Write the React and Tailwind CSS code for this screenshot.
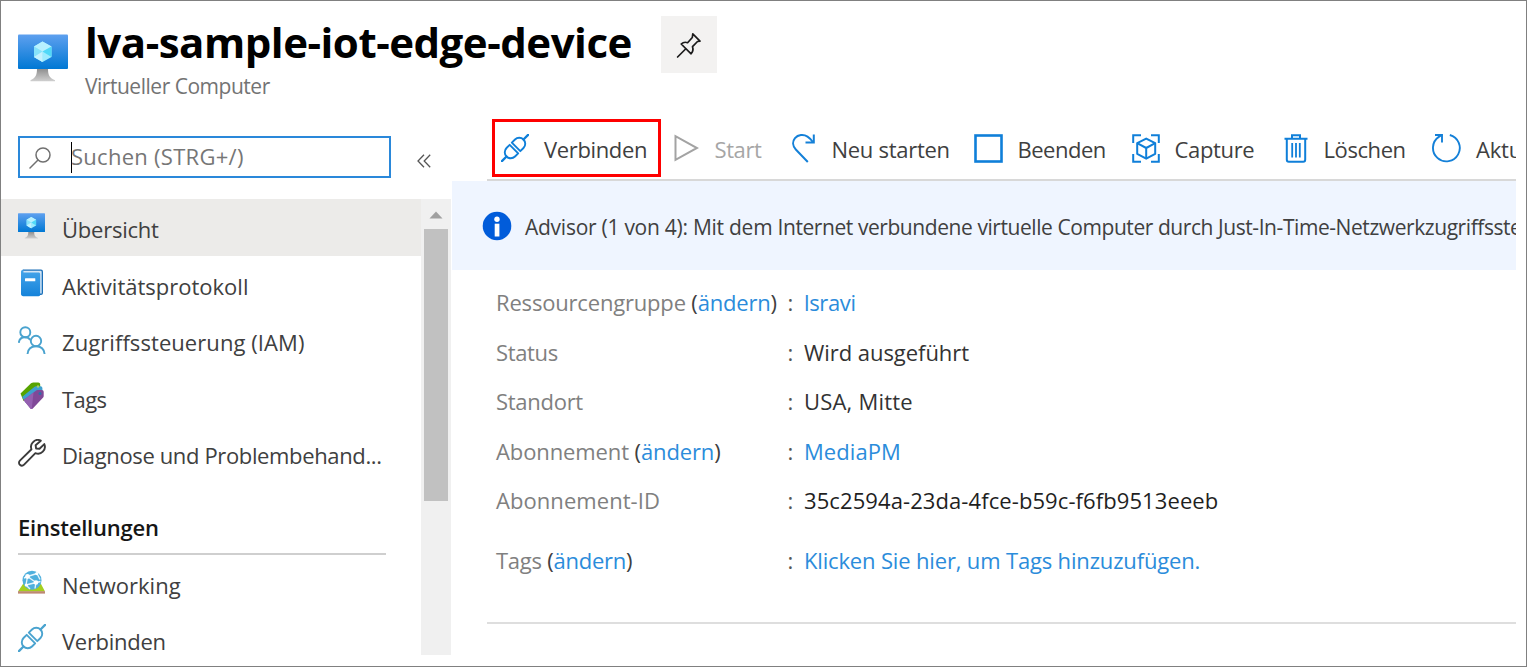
import React from "react";

/* ---------- Icons ---------- */

function MonitorIcon({ className, id }) {
  return (
    <svg className={className} viewBox="0 0 50 48" fill="none">
      <defs>
        <linearGradient id={`${id}-screen`} x1="0" y1="0" x2="0" y2="1">
          <stop offset="0" stopColor="#5ea0ef" />
          <stop offset="1" stopColor="#0078d4" />
        </linearGradient>
        <linearGradient id={`${id}-stand`} x1="0" y1="0" x2="0" y2="1">
          <stop offset="0" stopColor="#8a8a8a" />
          <stop offset="1" stopColor="#cfcfcf" />
        </linearGradient>
      </defs>
      <path d="M19 34h11c0 7 1 9.5 7 12.2v1H12.500v-1C18 43.500 19 41 19 34z" fill={`url(#${id}-stand)`} />
      <rect x="0" y="0.500" width="50" height="34.500" rx="1" fill={`url(#${id}-screen)`} />
      <path d="M24.500 7.500l9 5v10.500l-9 5-8.500-5V12.500z" fill="#9cebff" />
      <path d="M16 12.500l8.500-5 9 5-9 5z" fill="#b8f1ff" />
      <path d="M16 12.500l8.500 5V28L16 23z" fill="#86e2fa" />
      <path d="M24.500 17.500l9-5V23z" fill="#50d8f8" />
      <path d="M16 23l8.500-5.500V28z" fill="#c3f1ff" />
    </svg>
  );
}

function PinIcon() {
  return (
    <svg className="h-[28px] w-[28px]" viewBox="0 0 28 28" fill="none" stroke="#1b1b1b" strokeWidth="1.700" strokeLinejoin="round" strokeLinecap="round">
      <path d="M17.800 2.800l7.200 7.300-2.500.400-5 5.200c.9 2.500.4 4.900-1.400 7.100L6.200 13c2-1.900 4-2.200 6.400-1.300l4.700-5.200z" />
      <path d="M10.600 18L2.600 26" />
    </svg>
  );
}

function SearchIcon() {
  return (
    <svg className="h-[22px] w-[22px]" viewBox="0 0 22 22" fill="none" stroke="#707070" strokeWidth="1.500" strokeLinecap="round">
      <circle cx="14" cy="8" r="7" />
      <path d="M9 13L1 21" />
    </svg>
  );
}

function CollapseIcon() {
  return (
    <svg className="h-[14px] w-[14px]" viewBox="0 0 14 14" fill="none" stroke="#555" strokeWidth="1.300">
      <path d="M7 .800L1 7l6 6.200M13.200.800L7.200 7l6 6.200" />
    </svg>
  );
}

function PlugIcon({ className, color }) {
  return (
    <svg className={className} viewBox="0 0 28 28" fill="none" stroke={color} strokeWidth="1.900" strokeLinecap="round" strokeLinejoin="round">
      <g transform="translate(14 14) rotate(-45)">
        <path d="M-18.500 0H-12M12 0H18.500" strokeWidth="2.300" />
        <path d="M-1.500 -6H-6a6 6 0 0 0 0 12H-1.500z" />
        <path d="M1.500 -6H6a6 6 0 0 1 0 12H1.500z" />
      </g>
    </svg>
  );
}

function PlayIcon() {
  return (
    <svg className="h-[28px] w-[25px]" viewBox="0 0 25 28" fill="none" stroke="#a3a3a3" strokeWidth="2">
      <path d="M1.500 2.200v23.600L23 14z" />
    </svg>
  );
}

function RestartIcon() {
  return (
    <svg className="h-[30px] w-[24px]" viewBox="0 0 24 30" fill="none" stroke="#1480d8" strokeWidth="2">
      <path d="M15.800 29L3.800 16.500C.500 13 .300 8.500 3 5.200 6 1.600 11.500 1 15.500 3.600c2 1.300 3.600 3 5.200 5.200" />
      <path d="M21.800 1.500v8h-8.300" />
    </svg>
  );
}

function StopIcon() {
  return (
    <svg className="h-[29px] w-[29px]" viewBox="0 0 29 29" fill="none" stroke="#0f7fd9" strokeWidth="2.600">
      <rect x="1.500" y="1.500" width="26" height="26" />
    </svg>
  );
}

function CaptureIcon() {
  return (
    <svg className="h-[29px] w-[28px]" viewBox="0 0 28 29" fill="none" stroke="#0f7fd9" strokeWidth="2">
      <path d="M1.200 9V1.300H9M19 1.300h7.800V9M26.800 20v7.700H19M9 27.700H1.200V20" />
      <path d="M14.200 4.600l9 4.600v10.600l-9 4.900-9-4.900V9.200z" strokeLinejoin="round" />
      <path d="M5.200 9.200l9 4.800 9-4.800M14.200 14v10.700" />
    </svg>
  );
}

function TrashIcon() {
  return (
    <svg className="h-[29px] w-[24px]" viewBox="0 0 24 29" fill="none" stroke="#0f7fd9" strokeWidth="2">
      <path d="M.500 4.800h23M8 4.500V1.200h8v3.300" />
      <path d="M2.800 5v20.500c0 1.400.700 2.200 2 2.200h14.400c1.300 0 2-.800 2-2.200V5" />
      <path d="M8.200 9v14.500M12 9v14.500M15.800 9v14.500" strokeWidth="1.800" />
    </svg>
  );
}

function RefreshIcon() {
  return (
    <svg className="h-[30px] w-[30px]" viewBox="0 0 30 30" fill="none" stroke="#1480d8" strokeWidth="1.900">
      <path d="M18.800 2A13.400 13.400 0 1 1 7.800 3.900L11 1.700" />
      <path d="M4 2h7v7.500" />
    </svg>
  );
}

function BookIcon() {
  return (
    <svg className="h-[28px] w-[28px]" viewBox="0 0 28 28">
      <defs>
        <linearGradient id="book-cover" x1="0" y1="0" x2="0" y2="1">
          <stop offset="0" stopColor="#46a5ea" />
          <stop offset="1" stopColor="#1583da" />
        </linearGradient>
      </defs>
      <path d="M5 .500h18a2 2 0 0 1 2 2V24a2 2 0 0 1-2 2H5z" fill="#1a6fb8" />
      <path d="M5 1.800h17.500c.800 0 1.200.500 1.200 1.200v21.500H5z" fill="#d5e6f5" />
      <path d="M5.300.500C4 .500 3 1.500 3 2.800V25c0 1.300 1 2.200 2.200 2.200H20.500c1.200 0 1.700-.700 1.700-1.700V5.200c0-1-.700-1.700-1.700-1.700H5.500z" fill="url(#book-cover)" />
      <rect x="7" y="9.300" width="10.300" height="3" rx=".500" fill="#fff" />
    </svg>
  );
}

function PeopleIcon() {
  return (
    <svg className="h-[28px] w-[28px]" viewBox="0 0 28 28" fill="none" stroke="#4aa3cf" strokeWidth="1.900">
      <circle cx="7.300" cy="6.200" r="5" />
      <circle cx="18" cy="15" r="5.200" />
      <path d="M.800 16.800C1.200 13.300 3.300 11.300 7 11.300c2.400 0 4.200 1 5.300 2.600" />
      <path d="M9.500 28c.500-4.800 3.500-7.700 8.500-7.700s8.100 2.900 8.600 7.700" />
    </svg>
  );
}

function TagsIcon() {
  return (
    <svg className="h-[28px] w-[28px]" viewBox="0 0 28 28">
      <path d="M2.500 11.500L12 2.200C13 1.200 14 .700 15.200.600h5c1.200 0 2 .8 2 2V8L5.500 19z" fill="#57a300" />
      <path d="M4 15L16 5.200c.9-.8 1.700-1 2.700-1h3.800c1.100 0 1.900.8 1.900 1.900V12L8 21z" fill="#3fa0cf" />
      <path d="M5.500 18L17.500 9c.700-.600 1.300-.900 2.300-.900h4c1.200 0 1.900.8 1.900 1.900v3.700c0 1-.300 1.600-1 2.300L14.800 26.500c-.8.8-1.700.8-2.400 0z" fill="#804998" />
      <path d="M5.500 18l10-7.500-1.800 16.600c-.5 0-.9-.2-1.300-.6z" fill="#9460b0" />
      <circle cx="22" cy="11.500" r="1.500" fill="#2f6ea8" />
      <circle cx="20" cy="4.500" r="1.200" fill="#9fd06a" />
    </svg>
  );
}

function WrenchIcon() {
  return (
    <svg className="h-[28px] w-[28px]" viewBox="0 0 28 28" fill="none" stroke="#3b3b3b" strokeWidth="1.900" strokeLinejoin="round">
      <path d="M22.800 1.700c-2.700-1.300-6-.700-8 1.600-1.900 2-2.200 4.700-1.300 7L1.900 21.600c-1.200 1.200-1.200 3 0 4.200 1.200 1.100 3 1.100 4.200-.1l11.300-11.500c2.500 1 5.400.6 7.400-1.500 2.100-2.100 2.600-5 1.500-7.600l-4.800 4.700-3.400-.3-.5-3.300z" />
    </svg>
  );
}

function NetworkIcon() {
  return (
    <svg className="h-[28px] w-[28px]" viewBox="0 0 28 28">
      <path d="M5 16h18l4 7.500H0z" fill="#a4cf1f" />
      <path d="M9 16h10l-1.500 4h-7z" fill="#8ab51a" />
      <rect x="0" y="23.200" width="27" height="2.400" fill="#bd8972" />
      <circle cx="14" cy="12.300" r="9.500" fill="#4fb0dd" />
      <path d="M9.500 8.500l9.500-3M9.500 8.500l8.500 6M9.500 8.500L8 17M8 17l10-2.500M19 5.500l3 6M18 14.500l4.500-1M18 14.500l-1 6M8 17l4 4M9.500 8.500L6 10" stroke="#e6f5fc" strokeWidth="1.400" fill="none" />
      <circle cx="9.500" cy="8.500" r="2.400" fill="#fff" />
      <circle cx="18" cy="14.500" r="2.300" fill="#fff" />
      <circle cx="18.800" cy="5.600" r="1.600" fill="#fff" />
      <circle cx="8.300" cy="17" r="1.600" fill="#fff" />
    </svg>
  );
}

function InfoIcon() {
  return (
    <svg className="h-[30px] w-[30px]" viewBox="0 0 30 30">
      <circle cx="15" cy="15" r="14.300" fill="#015cda" />
      <circle cx="15" cy="8.200" r="2.700" fill="#fff" />
      <rect x="12.700" y="12.700" width="4.700" height="12.800" fill="#fff" />
    </svg>
  );
}

/* ---------- Sidebar ---------- */

function NavItem({ icon, label, active, tracking, lift = "pb-[1px]" }) {
  return (
    <li className={`flex h-[56.500px] shrink-0 items-center pl-[17px] ${active ? "bg-[#ecebe9]" : ""}`}>
      <span className={`flex w-[44px] shrink-0 ${lift}`}>{icon}</span>
      <span className={`whitespace-nowrap pt-[4px] leading-[30px] ${tracking}`}>{label}</span>
    </li>
  );
}

function Sidebar() {
  return (
    <div className="flex w-[450px] shrink-0 flex-col">
      <div className="flex h-[62px] items-center pt-[15px]">
        <div className="ml-[17px] mt-[-1px] flex h-[42px] w-[372.500px] items-center border-2 border-[#2a88da] bg-white">
          <span className="ml-[9px] mt-[1px] flex w-[42px] shrink-0"><SearchIcon /></span>
          <span className="h-[31px] w-px shrink-0 bg-black" />
          <span className="ml-[-1px] whitespace-nowrap pb-[2px] leading-[30px] tracking-[0.280px] text-[#767676]">Suchen (STRG+/)</span>
        </div>
        <span className="ml-[26px] mt-[6px]"><CollapseIcon /></span>
      </div>
      <div className="mt-[18px] flex h-[456px] overflow-hidden">
        <div className="flex w-[420px] shrink-0 flex-col text-[#404040]">
          <ul className="shrink-0">
            <NavItem active icon={<MonitorIcon id="nav-vm" className="h-[26px] w-[27px]" />} label="Übersicht" tracking="tracking-[-0.240px]" lift="pb-[3px]" />
            <NavItem icon={<BookIcon />} label="Aktivitätsprotokoll" tracking="tracking-[0px]" />
            <NavItem icon={<PeopleIcon />} label="Zugriffssteuerung (IAM)" tracking="tracking-[0.070px]" />
            <NavItem icon={<TagsIcon />} label="Tags" tracking="tracking-[-0.600px]" />
            <NavItem icon={<WrenchIcon />} label="Diagnose und Problembehand..." tracking="tracking-[-0.360px]" />
          </ul>
          <div className="ml-[17px] mr-[35px] flex h-[73px] shrink-0 items-end border-b-2 border-[#cfcfcf] pb-[11px]">
            <h2 className="whitespace-nowrap font-semibold leading-[30px] tracking-[-0.220px] text-[#161616]">Einstellungen</h2>
          </div>
          <ul className="shrink-0">
            <NavItem icon={<NetworkIcon />} label="Networking" tracking="tracking-[0px]" lift="pb-[1px]" />
            <NavItem icon={<PlugIcon className="h-[28px] w-[28px]" color="#4aa3cf" />} label="Verbinden" tracking="tracking-[-0.280px]" lift="pb-[2px]" />
          </ul>
        </div>
        <div className="flex w-[30px] shrink-0 flex-col items-center bg-[#f0f0f0]">
          <svg className="mt-[12px] h-[8px] w-[14px]" viewBox="0 0 14 8"><path d="M7 .500L13.500 7.500H.500z" fill="#a0a0a0" /></svg>
          <div className="mt-[9.500px] h-[272px] w-[24px] bg-[#c1c1c1]" />
        </div>
      </div>
    </div>
  );
}

/* ---------- Main ---------- */

function Command({ icon, label, iconBox, tracking, disabled }) {
  return (
    <div className="flex shrink-0 items-center">
      <span className={`flex shrink-0 ${iconBox}`}>{icon}</span>
      <span className={`whitespace-nowrap pt-[2px] leading-[30px] ${tracking} ${disabled ? "text-[#a6a6a6]" : "text-[#404040]"}`}>{label}</span>
    </div>
  );
}

function Toolbar() {
  return (
    <div className="ml-[36px] flex h-[62px] items-start overflow-hidden border-b-2 border-[#d8d8d8]">
      <div className="ml-[5px] flex h-[58px] w-[169px] shrink-0 items-center border-[3px] border-[#fe0000] pl-[6px]">
        <Command icon={<PlugIcon className="h-[28px] w-[28px]" color="#0f7fd9" />} label="Verbinden" iconBox="w-[43px]" tracking="tracking-[-0.350px]" />
      </div>
      <div className="flex h-[58px] items-center">
        <div className="ml-[12.500px] w-[118.500px]"><Command disabled icon={<PlayIcon />} label="Start" iconBox="w-[41px]" tracking="tracking-[-0.400px]" /></div>
        <div className="w-[182px]"><Command icon={<RestartIcon />} label="Neu starten" iconBox="w-[39.500px]" tracking="tracking-[-0.280px]" /></div>
        <div className="w-[158px]"><Command icon={<StopIcon />} label="Beenden" iconBox="w-[43.500px]" tracking="tracking-[-0.480px]" /></div>
        <div className="w-[152px]"><Command icon={<CaptureIcon />} label="Capture" iconBox="w-[42.500px]" tracking="tracking-[-0.350px]" /></div>
        <div className="w-[147px]"><Command icon={<TrashIcon />} label="Löschen" iconBox="w-[39.500px]" tracking="tracking-[-0.420px]" /></div>
        <Command icon={<RefreshIcon />} label="Aktualisieren" iconBox="w-[45px]" tracking="tracking-[-0.200px]" />
      </div>
    </div>
  );
}

function Property({ label, change, height, value, link, tracking, valueTracking, dark }) {
  return (
    <div className={`flex items-center whitespace-nowrap leading-[30px] ${height}`}>
      <dt className={`w-[291.500px] shrink-0 text-[#808080] ${tracking}`}>
        {label}
        {change && <span className="text-[#404040]"> (<a className="text-[#2b8cdb]">ändern</a>)</span>}
      </dt>
      <dd className="w-[16.500px] shrink-0 text-[#555]">:</dd>
      <dd className={`${valueTracking} ${link ? "text-[#2b8cdb]" : dark ? "text-[#1f1f1f]" : "text-[#333]"}`}>{value}</dd>
    </div>
  );
}

function Main() {
  return (
    <main className="mr-[10px] flex min-w-0 flex-1 flex-col">
      <Toolbar />
      <div className="ml-[1px] flex h-[89px] shrink-0 items-center overflow-hidden bg-[#eff5ff] pl-[29.500px]">
        <span className="flex w-[43.500px] shrink-0"><InfoIcon /></span>
        <span className="whitespace-nowrap pt-[3px] text-[21px] leading-[30px] text-[#404040]">
          <span className="tracking-[-0.260px]">Advisor (1 von 4): Mit dem </span>
          <span className="tracking-[-0.430px]">Internet verbundene virtuelle Computer durch Just-In-Time-Netzwerkzugriffssteuerung schützen</span>
        </span>
      </div>
      <dl className="ml-[45px] mt-[7px]">
        <Property height="h-[50px]" label="Ressourcengruppe" change value="lsravi" link tracking="tracking-[-0.180px]" valueTracking="tracking-[-0.350px]" />
        <Property height="h-[49.500px]" label="Status" value="Wird ausgeführt" tracking="tracking-[-0.350px]" valueTracking="tracking-[-0.050px]" />
        <Property height="h-[49.500px]" label="Standort" value="USA, Mitte" tracking="tracking-[-0.280px]" valueTracking="tracking-[0.200px]" />
        <Property height="h-[49.500px]" label="Abonnement" change value="MediaPM" link tracking="tracking-[-0.110px]" valueTracking="tracking-[0.080px]" />
        <Property height="h-[49.500px]" label="Abonnement-ID" value="35c2594a-23da-4fce-b59c-f6fb9513eeeb" dark tracking="tracking-[0.060px]" valueTracking="tracking-[0.090px]" />
        <Property height="h-[69px]" label="Tags" change value="Klicken Sie hier, um Tags hinzuzufügen." link tracking="tracking-[-0.250px]" valueTracking="tracking-[-0.160px]" />
      </dl>
      <hr className="ml-[36px] mt-[28px] border-t-2 border-[#dedede]" />
    </main>
  );
}

export default function App() {
  return (
    <div className="flex h-[667px] w-[1527px] flex-col overflow-hidden border border-[#808080] bg-white font-['Open_Sans','Noto_Sans',sans-serif] text-[22px]">
      <header className="flex h-[118px] shrink-0 items-start">
        <MonitorIcon id="header-vm" className="ml-[17px] mt-[33px] h-[48px] w-[50px] shrink-0" />
        <div className="ml-[17px] w-[575px]">
          <h1 className="mt-[13px] whitespace-nowrap text-[42px] font-bold leading-[56px] tracking-[-0.480px] text-black">lva-sample-iot-edge-device</h1>
          <p className="mt-[1px] whitespace-nowrap text-[21px] leading-[30px] tracking-[-0.480px] text-[#737373]">Virtueller Computer</p>
        </div>
        <button className="ml-[1px] mt-[15px] flex h-[57px] w-[56px] items-center justify-center bg-[#f3f2f1]"><PinIcon /></button>
      </header>
      <div className="flex min-h-0 flex-1">
        <Sidebar />
        <Main />
      </div>
    </div>
  );
}
